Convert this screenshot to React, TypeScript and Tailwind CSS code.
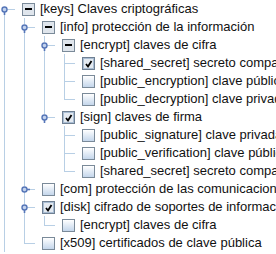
import React from "react";

type Mark = "none" | "check" | "partial";
type Kind = "leaf" | "open" | "closed";

type TreeRow = {
  level: number;
  label: string;
  mark: Mark;
  kind: Kind;
  guides: boolean[];
  more: boolean;
  first?: boolean;
};

const LINE = "#b8cfe5";
const HANDLE = "#5676b8";

const rows: TreeRow[] = [
  { level: 0, label: "[keys] Claves criptográficas", mark: "partial", kind: "open", guides: [], more: true, first: true },
  { level: 1, label: "[info] protección de la información", mark: "partial", kind: "open", guides: [true], more: true },
  { level: 2, label: "[encrypt] claves de cifra", mark: "partial", kind: "open", guides: [true, true], more: true },
  { level: 3, label: "[shared_secret] secreto compartido", mark: "check", kind: "leaf", guides: [true, true, true], more: true },
  { level: 3, label: "[public_encryption] clave pública", mark: "none", kind: "leaf", guides: [true, true, true], more: true },
  { level: 3, label: "[public_decryption] clave privada", mark: "none", kind: "leaf", guides: [true, true, true], more: false },
  { level: 2, label: "[sign] claves de firma", mark: "check", kind: "open", guides: [true, true], more: false },
  { level: 3, label: "[public_signature] clave privada", mark: "none", kind: "leaf", guides: [true, true, false], more: true },
  { level: 3, label: "[public_verification] clave pública", mark: "none", kind: "leaf", guides: [true, true, false], more: true },
  { level: 3, label: "[shared_secret] secreto compartido", mark: "none", kind: "leaf", guides: [true, true, false], more: false },
  { level: 1, label: "[com] protección de las comunicaciones", mark: "none", kind: "closed", guides: [true], more: true },
  { level: 1, label: "[disk] cifrado de soportes de información", mark: "check", kind: "open", guides: [true], more: true },
  { level: 2, label: "[encrypt] claves de cifra", mark: "none", kind: "leaf", guides: [true, true], more: false },
  { level: 1, label: "[x509] certificados de clave pública", mark: "none", kind: "leaf", guides: [true], more: false },
];

function Guide({ on }: { on: boolean }) {
  return (
    <svg width="20" height="18" className="shrink-0">
      {on ? <line x1="4.5" y1="0" x2="4.5" y2="18" stroke={LINE} /> : null}
    </svg>
  );
}

// connector column of the node itself: leg + handle
function Leg({ kind, more, first }: { kind: Kind; more: boolean; first?: boolean }) {
  const hasHandle = kind !== "leaf";
  return (
    <svg width="20" height="18" className="shrink-0">
      {!first ? <line x1="4.5" y1="0" x2="4.5" y2={hasHandle ? 6 : 9.5} stroke={LINE} /> : null}
      {more ? <line x1="4.5" y1={hasHandle ? 12 : 9} x2="4.5" y2="18" stroke={LINE} /> : null}
      <line x1={hasHandle ? 7 : 4} y1="9.5" x2="15" y2="9.5" stroke={LINE} />
      {hasHandle ? (
        <g>
          <circle cx="4.5" cy="9.5" r="2.5" fill="#c3d3ee" stroke={HANDLE} strokeWidth="1.4" />
          {kind === "open" ? (
            <line x1="4.5" y1="12" x2="4.5" y2="15" stroke={HANDLE} strokeWidth="1.6" />
          ) : (
            <line x1="7" y1="9.5" x2="10" y2="9.5" stroke={HANDLE} strokeWidth="1.6" />
          )}
        </g>
      ) : null}
    </svg>
  );
}

function Box({ mark }: { mark: Mark }) {
  if (mark === "partial") {
    return (
      <div className="ml-[2px] flex h-[13px] w-[13px] shrink-0 items-center justify-center border border-[#7a8a99] bg-[#dfe5ec]">
        <div className="h-[2px] w-[7px] bg-black" />
      </div>
    );
  }
  if (mark === "check") {
    return (
      <div className="ml-[2px] flex h-[13px] w-[13px] shrink-0 items-center justify-center border border-[#6f8093] bg-[#e4eaf1] shadow-[inset_0_0_0_1px_#a9bdd3]">
        <svg width="11" height="11">
          <path d="M3 6 L5 8.5 L8.5 3" fill="none" stroke="#000" strokeWidth="1.8" />
        </svg>
      </div>
    );
  }
  return (
    <div className="ml-[2px] h-[13px] w-[13px] shrink-0 border border-[#7a8a99] bg-linear-to-b from-white to-[#c4d6eb]" />
  );
}

export default function App() {
  return (
    <div className="h-[254px] w-[276px] overflow-hidden bg-white font-['Liberation_Sans',Arial,sans-serif] text-[13px] text-[#111]">
      {rows.map((r, i) => (
        <div key={i} className="flex h-[18px] items-center whitespace-nowrap">
          {r.guides.map((g, j) => (
            <Guide key={j} on={g} />
          ))}
          <Leg kind={r.kind} more={r.more} first={r.first} />
          <Box mark={r.mark} />
          <span className="ml-[5px] leading-[18px]">{r.label}</span>
        </div>
      ))}
    </div>
  );
}
